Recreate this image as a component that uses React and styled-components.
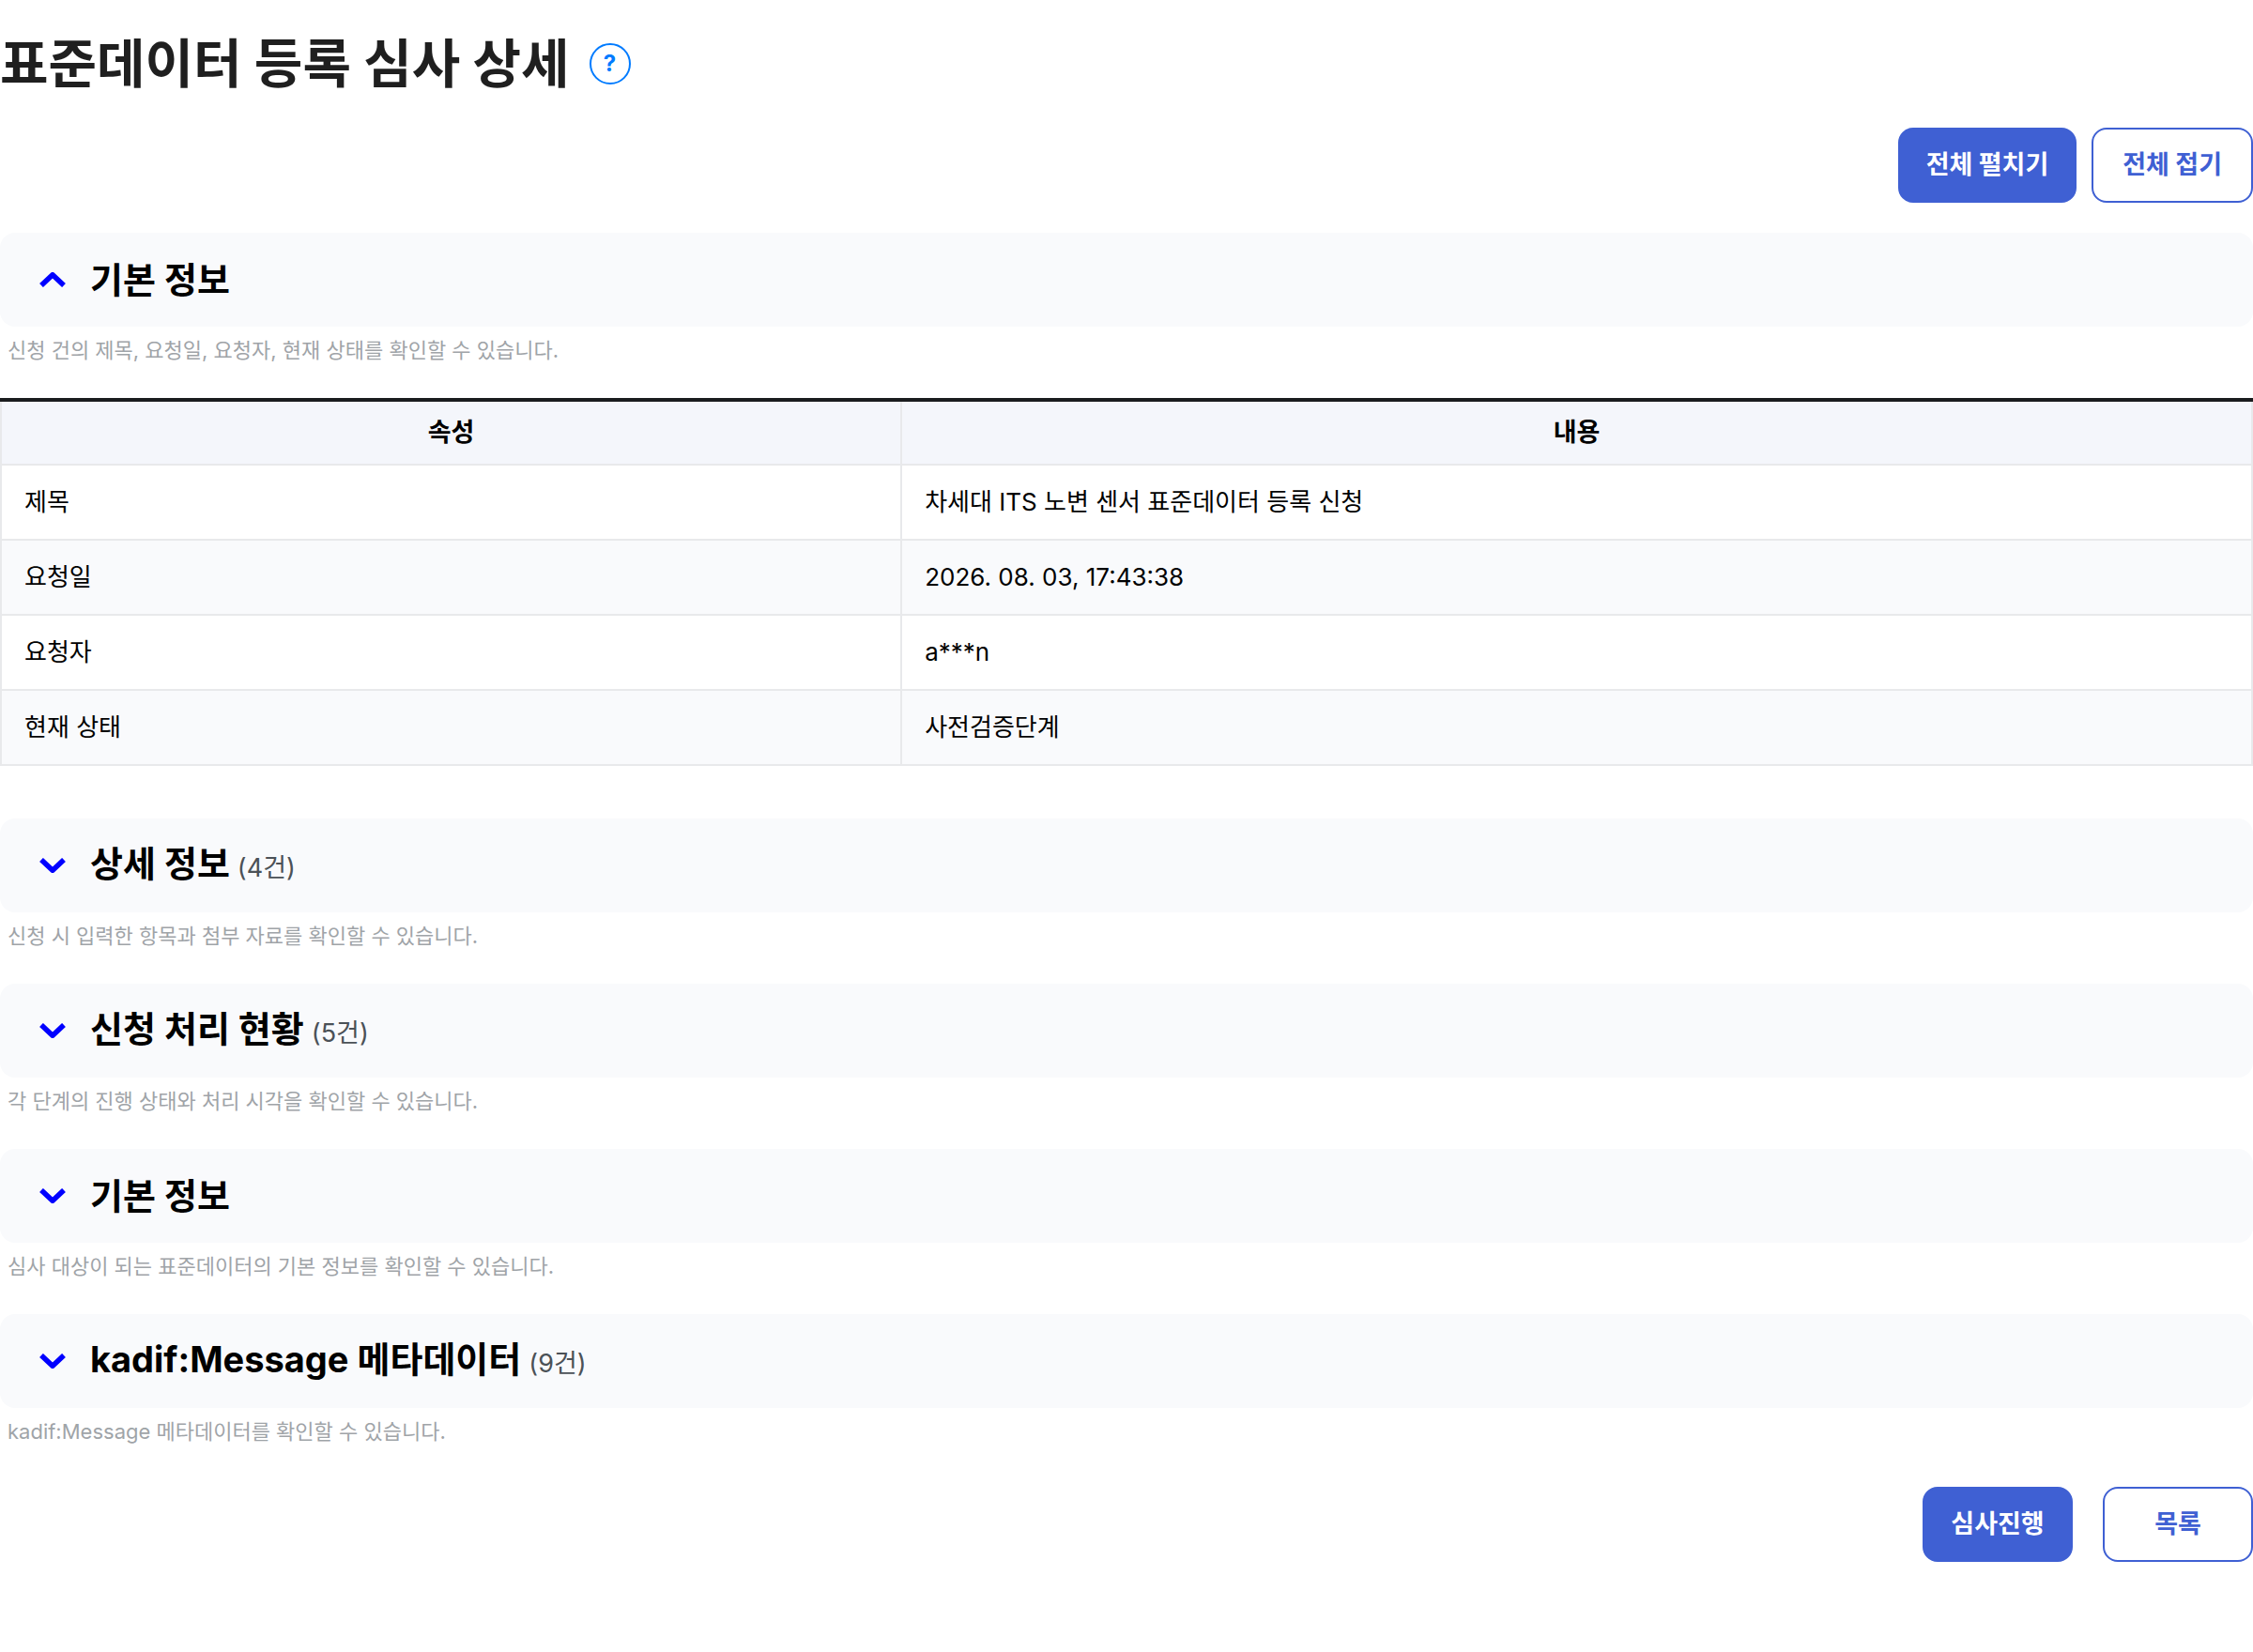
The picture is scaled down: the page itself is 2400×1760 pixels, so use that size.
import React, { useState } from 'react';
import styled, { createGlobalStyle, css } from 'styled-components';

const GlobalStyle = createGlobalStyle`
  * {
    box-sizing: border-box;
  }

  body {
    margin: 0;
    background: #ffffff;
    color: #000000;
    font-family: Inter, 'Noto Sans CJK KR', sans-serif;
  }

  button {
    font-family: inherit;
    cursor: pointer;
  }
`;

const Page = styled.main`
  display: flex;
  flex-direction: column;
  width: 100%;
`;

const PageHeader = styled.header`
  display: flex;
  align-items: center;
  gap: 21px;
  height: 136px;
`;

const PageTitle = styled.h1`
  margin: 0;
  color: #1f1f1f;
  font-size: 56px;
  font-weight: 700;
  line-height: 72px;
`;

const HelpButton = styled.button`
  display: flex;
  align-items: center;
  justify-content: center;
  width: 44px;
  height: 44px;
  padding: 0;
  border: 2px solid #007bff;
  border-radius: 50%;
  background: #ffffff;
  color: #007bff;
  font-size: 24px;
  font-weight: 700;
  line-height: 24px;
`;

const ButtonRow = styled.div`
  display: flex;
  justify-content: flex-end;
  gap: ${({ $wide }) => ($wide ? '32px' : '16px')};
  margin: ${({ $wide }) => ($wide ? '8px 0 96px' : '0 0 32px')};
`;

const Button = styled.button`
  min-width: 160px;
  height: 80px;
  padding: 0 31px;
  border: 2px solid #3f60d3;
  border-radius: 16px;
  background: #ffffff;
  color: #3f60d3;
  font-size: 27px;
  font-weight: 700;
  line-height: 40px;

  ${({ $primary }) => $primary && css`
    padding: 0 28px;
    background: #3f60d3;
    color: #ffffff;
  `}
`;

const SectionHeading = styled.h2`
  margin: 0;
`;

const SectionToggle = styled.button`
  display: flex;
  align-items: center;
  width: 100%;
  height: 100px;
  padding: 0 42px;
  border: 0;
  border-radius: 16px;
  background: #f9fafc;
  color: #000000;
  text-align: left;

  svg {
    flex: none;
    margin-right: 26px;
  }
`;

const SectionTitle = styled.span`
  font-size: 38px;
  font-weight: 700;
  line-height: 56px;

  small {
    margin-left: 8px;
    color: #4b5157;
    font-size: 27px;
    font-weight: 400;
  }
`;

const Description = styled.p`
  margin: 0;
  padding: 8px 8px 34px;
  color: #9fa4a8;
  font-size: 22px;
  line-height: 34px;
`;

const Table = styled.table`
  width: 100%;
  margin-bottom: 56px;
  border-collapse: collapse;
  table-layout: fixed;
  border-top: 4px solid #1a1c1e;
  font-size: 26px;
  line-height: 40px;

  col:first-child {
    width: 40%;
  }

  th,
  td {
    border: 2px solid #e8e9eb;
  }

  thead th {
    height: 69px;
    padding: 0 24px;
    border-top: 4px solid #1a1c1e;
    background: #f4f6fb;
    font-size: 27px;
    font-weight: 700;
    text-align: center;
  }

  tbody th,
  tbody td {
    height: 80px;
    padding: 0 24px;
    font-weight: 400;
    text-align: left;
  }

  tbody tr:nth-child(even) {
    background: #f9fafc;
  }
`;

const sections = [
  {
    id: 'basic',
    title: '기본 정보',
    description: '신청 건의 제목, 요청일, 요청자, 현재 상태를 확인할 수 있습니다.',
    rows: [
      ['제목', '차세대 ITS 노변 센서 표준데이터 등록 신청'],
      ['요청일', '2026. 08. 03, 17:43:38'],
      ['요청자', 'a***n'],
      ['현재 상태', '사전검증단계'],
    ],
  },
  {
    id: 'detail',
    title: '상세 정보',
    count: 4,
    description: '신청 시 입력한 항목과 첨부 자료를 확인할 수 있습니다.',
  },
  {
    id: 'progress',
    title: '신청 처리 현황',
    count: 5,
    description: '각 단계의 진행 상태와 처리 시각을 확인할 수 있습니다.',
  },
  {
    id: 'standard',
    title: '기본 정보',
    description: '심사 대상이 되는 표준데이터의 기본 정보를 확인할 수 있습니다.',
  },
  {
    id: 'metadata',
    title: 'kadif:Message 메타데이터',
    count: 9,
    description: 'kadif:Message 메타데이터를 확인할 수 있습니다.',
  },
];

const Chevron = ({ up }) => (
  <svg width="28" height="16" viewBox="0 0 28 16" fill="none" aria-hidden="true">
    <path
      d={up ? 'M2 14L14 2.8L26 14' : 'M2 2L14 13.2L26 2'}
      stroke="#0000ff"
      strokeWidth="5.6"
      strokeLinejoin="round"
    />
  </svg>
);

const InfoTable = ({ rows }) => (
  <Table>
    <colgroup>
      <col />
      <col />
    </colgroup>
    <thead>
      <tr>
        <th scope="col">속성</th>
        <th scope="col">내용</th>
      </tr>
    </thead>
    <tbody>
      {rows.map(([name, value]) => (
        <tr key={name}>
          <th scope="row">{name}</th>
          <td>{value}</td>
        </tr>
      ))}
    </tbody>
  </Table>
);

const Section = ({ section, open, onToggle }) => (
  <section>
    <SectionHeading>
      <SectionToggle type="button" aria-expanded={open} onClick={onToggle}>
        <Chevron up={open} />
        <SectionTitle>
          {section.title}
          {section.count && <small>({section.count}건)</small>}
        </SectionTitle>
      </SectionToggle>
    </SectionHeading>
    <Description>{section.description}</Description>
    {open && section.rows && <InfoTable rows={section.rows} />}
  </section>
);

const App = () => {
  const [openIds, setOpenIds] = useState(['basic']);

  const toggle = (id) => {
    setOpenIds(openIds.includes(id) ? openIds.filter((item) => item !== id) : [...openIds, id]);
  };

  return (
    <>
      <GlobalStyle />
      <Page>
        <PageHeader>
          <PageTitle>표준데이터 등록 심사 상세</PageTitle>
          <HelpButton type="button">?</HelpButton>
        </PageHeader>
        <ButtonRow>
          <Button type="button" $primary onClick={() => setOpenIds(sections.map(({ id }) => id))}>
            전체 펼치기
          </Button>
          <Button type="button" onClick={() => setOpenIds([])}>전체 접기</Button>
        </ButtonRow>
        {sections.map((section) => (
          <Section
            key={section.id}
            section={section}
            open={openIds.includes(section.id)}
            onToggle={() => toggle(section.id)}
          />
        ))}
        <ButtonRow $wide>
          <Button type="button" $primary>심사진행</Button>
          <Button type="button">목록</Button>
        </ButtonRow>
      </Page>
    </>
  );
};

export default App;
